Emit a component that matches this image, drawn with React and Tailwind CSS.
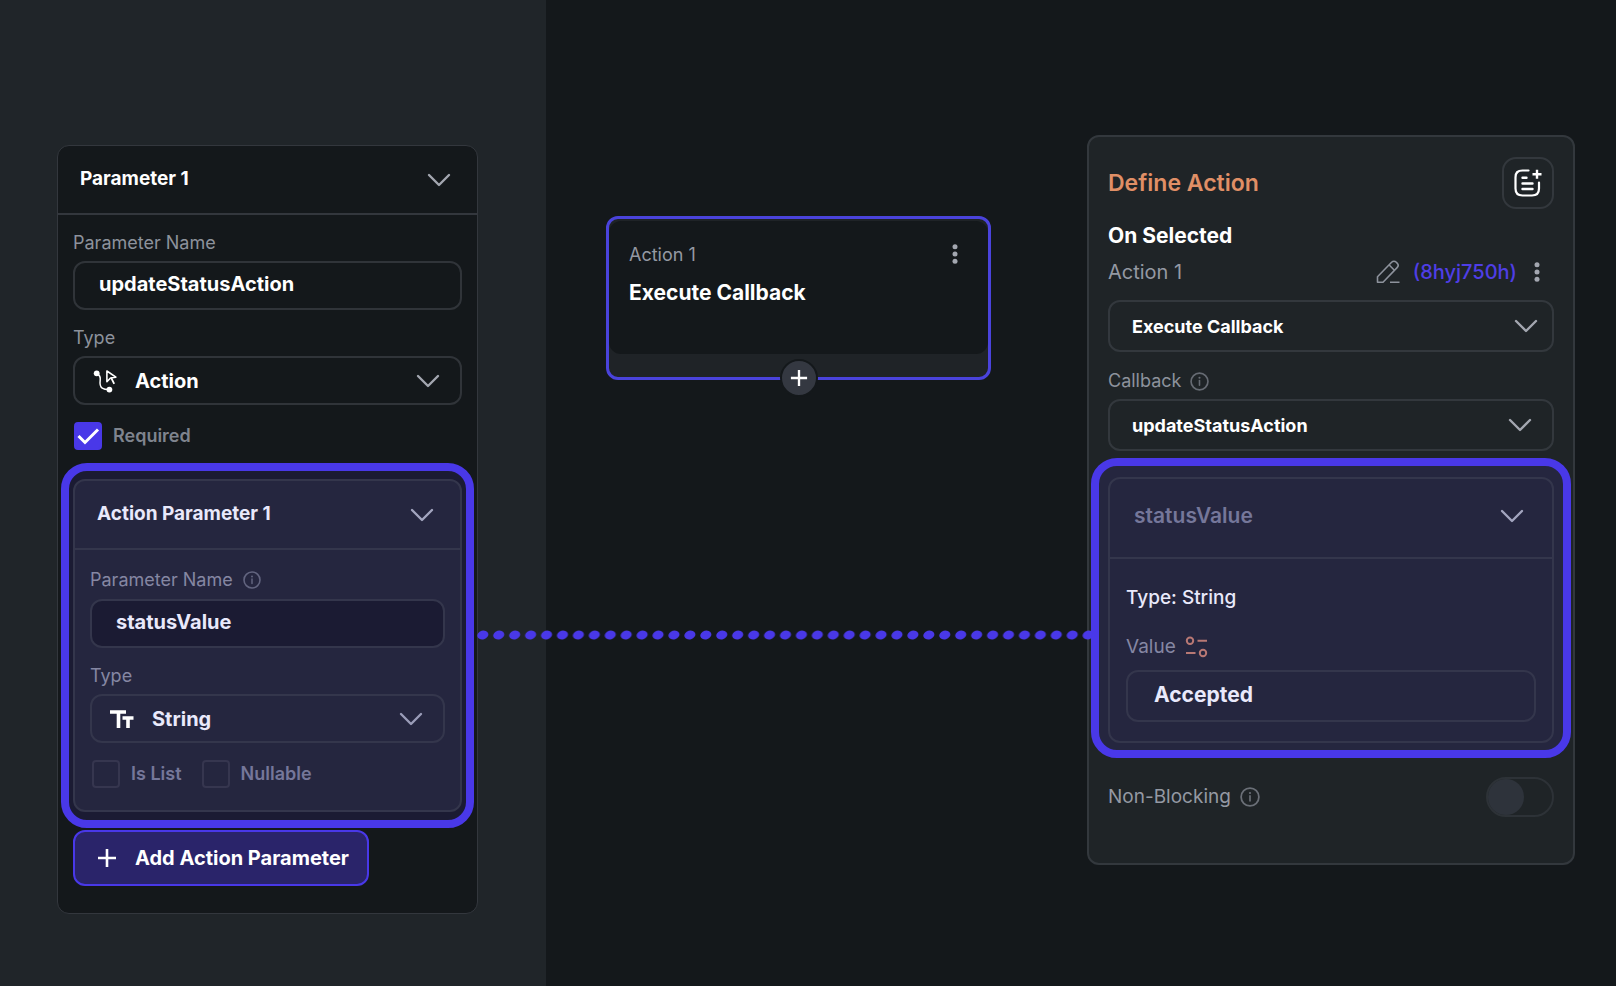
/* ---------- icons ---------- */

function Chevron({ className = '' }) {
  return (
    <svg viewBox="0 0 24 14" fill="none" className={`h-[14px] w-6 ${className}`} aria-hidden>
      <path d="M2 2l10 10L22 2" stroke="currentColor" strokeWidth="2.4" strokeLinecap="round" strokeLinejoin="round" />
    </svg>
  )
}

function InfoIcon({ className = 'h-[18px] w-[18px]' }) {
  return (
    <svg viewBox="0 0 18 18" fill="none" className={className} aria-hidden>
      <circle cx="9" cy="9" r="8" stroke="currentColor" strokeWidth="1.6" />
      <path d="M9 8v4.6" stroke="currentColor" strokeWidth="1.5" strokeLinecap="round" />
      <circle cx="9" cy="5.4" r="1" fill="currentColor" />
    </svg>
  )
}

function KebabIcon() {
  return (
    <svg viewBox="0 0 6 20" fill="currentColor" className="h-5 w-[6px]" aria-hidden>
      <circle cx="3" cy="2.7" r="2.5" />
      <circle cx="3" cy="10" r="2.5" />
      <circle cx="3" cy="17.3" r="2.5" />
    </svg>
  )
}

function PlusIcon({ className = 'h-5 w-5' }) {
  return (
    <svg viewBox="0 0 20 20" fill="none" className={className} aria-hidden>
      <path d="M10 1v18M1 10h18" stroke="currentColor" strokeWidth="2.6" />
    </svg>
  )
}

function ActionIcon() {
  return (
    <svg viewBox="0 0 24 24" fill="none" className="h-6 w-6" aria-hidden>
      <circle cx="3.7" cy="4.3" r="2.9" fill="currentColor" />
      <circle cx="16.4" cy="20.6" r="2.9" fill="currentColor" />
      <path
        d="M4 5c2.6 1 3.600 3.200 3.200 6.200-.5 3.800-.4 6.400 2 8 1.800 1.200 4.400 1.400 6.600 1.400"
        stroke="currentColor"
        strokeWidth="1.5"
      />
      <path d="M13.900 2v10.800l3.600-3.800 5.400-.8z" stroke="currentColor" strokeWidth="1.6" strokeLinejoin="round" />
      <path d="M18.200 8.800l3 6" stroke="currentColor" strokeWidth="1.8" />
    </svg>
  )
}

function TextTypeIcon() {
  return (
    <svg viewBox="0 0 24 20" fill="none" className="h-5 w-6" aria-hidden>
      <path d="M0 3h16M8.500 2v17" stroke="currentColor" strokeWidth="3.600" />
      <path d="M12.500 9h11M18 8v11" stroke="currentColor" strokeWidth="3.600" />
    </svg>
  )
}

function NoteAddIcon() {
  return (
    <svg viewBox="0 0 28 28" fill="none" className="h-7 w-7" aria-hidden>
      <path
        d="M14.500 1.500H8.500c-5 0-7 2-7 7v11c0 5 2 7 7 7h9.500c5 0 7-2 7-7V13.500"
        stroke="currentColor"
        strokeWidth="2.200"
        strokeLinecap="round"
      />
      <path d="M8.500 8.800h4M8.500 14.500h10M8.500 20h10" stroke="currentColor" strokeWidth="2.400" strokeLinecap="round" />
      <path d="M23 .8v9M18.500 5.300h9" stroke="currentColor" strokeWidth="2.400" />
    </svg>
  )
}

function EditIcon() {
  return (
    <svg viewBox="0 0 24 24" fill="none" className="h-6 w-6" aria-hidden>
      <path
        d="M1.500 22.300v-5.600L15.600 2.300c1.400-1.400 3.300-1.400 4.700 0l.8.8c1.400 1.400 1.400 3.100 0 4.500L7 22.300z"
        stroke="currentColor"
        strokeWidth="1.600"
        strokeLinejoin="round"
      />
      <path d="M13.200 5l5.200 5.200M14 22.300h9.500" stroke="currentColor" strokeWidth="1.600" />
    </svg>
  )
}

function VariableIcon() {
  return (
    <svg viewBox="0 0 24 22" fill="none" className="h-[22px] w-6" aria-hidden>
      <g stroke="currentColor" strokeWidth="2">
        <circle cx="5" cy="4.800" r="3.200" />
        <path d="M12.500 4.800H22M1 17h9.500" />
        <circle cx="18" cy="17" r="3.200" />
      </g>
    </svg>
  )
}

/* ---------- form parts ---------- */

function CheckBox({ id, label, defaultChecked, tone }) {
  return (
    <div className="flex items-center gap-[11px]">
      <span className="relative flex h-7 w-7">
        <input
          id={id}
          type="checkbox"
          defaultChecked={defaultChecked}
          className={`peer h-7 w-7 appearance-none rounded-[4px] border-2 checked:border-[#4938e8] checked:bg-[#4938e8] ${tone === 'tinted' ? 'border-[#36364f]' : 'border-[#363a42]'}`}
        />
        <svg
          viewBox="0 0 28 28"
          fill="none"
          className="pointer-events-none absolute inset-0 hidden h-7 w-7 peer-checked:block"
          aria-hidden
        >
          <path d="M4.500 14l6.500 6.500L24 7.500" stroke="white" strokeWidth="3" />
        </svg>
      </span>
      <label
        htmlFor={id}
        className={`text-[18px] leading-6 font-semibold ${tone === 'tinted' ? 'text-[#75779a]' : 'text-[#7f848e]'}`}
      >
        {label}
      </label>
    </div>
  )
}

function SelectBox({ id, label, value, icon, className = '', chevronClass = '' }) {
  return (
    <div className="relative">
      {icon && (
        <span className="pointer-events-none absolute inset-y-0 left-5 flex items-center text-white">{icon}</span>
      )}
      <select
        id={id}
        aria-label={label}
        defaultValue={value}
        className={`w-full appearance-none rounded-xl border-2 bg-transparent font-bold outline-none ${className}`}
      >
        <option>{value}</option>
      </select>
      <span className={`pointer-events-none absolute inset-y-0 flex items-center ${chevronClass}`}>
        <Chevron />
      </span>
    </div>
  )
}

/* ---------- left: component parameters ---------- */

function ActionParameterCard() {
  return (
    <div className="-mx-3 mt-[13px] rounded-[26px] border-8 border-[#4938e8] bg-[#1b1b33] px-1 py-2">
      <div className="rounded-xl border-2 border-[#34364c] bg-[#25263f] pb-[22px]">
        <button
          type="button"
          aria-expanded="true"
          className="flex h-[69px] w-full items-center justify-between border-b-2 border-[#34364c] pr-[26px] pl-[22px] text-[19px] font-bold text-[#e9e9fb]"
        >
          Action Parameter 1
          <Chevron className="text-[#a3a5bf]" />
        </button>
        <div className="px-[15px] pt-[18px]">
          <label htmlFor="inner-name" className="flex items-center gap-[10px] text-[18px] leading-6 text-[#8587a3]">
            Parameter Name
            <span className="text-[#62647f]">
              <InfoIcon />
            </span>
          </label>
          <input
            id="inner-name"
            defaultValue="statusValue"
            className="mt-[7px] h-[49px] w-full rounded-xl border-2 border-[#34364c] bg-[#1b1b33] px-6 pb-1 text-[20px] font-bold text-[#e9e9fb] outline-none"
          />
          <label htmlFor="inner-type" className="mt-4 mb-[6px] block text-[18px] leading-6 text-[#8587a3]">
            Type
          </label>
          <SelectBox
            id="inner-type"
            value="String"
            icon={<TextTypeIcon />}
            className="h-[49px] border-[#34364c] pl-[60px] text-[20px] text-[#e9e9fb]"
            chevronClass="right-[22px] text-[#9a9cb8]"
          />
          <div className="mt-[17px] flex gap-5 pl-[2px]">
            <CheckBox id="is-list" label="Is List" tone="tinted" />
            <CheckBox id="nullable" label="Nullable" tone="tinted" />
          </div>
        </div>
      </div>
    </div>
  )
}

function ParameterCard() {
  return (
    <section className="rounded-xl border border-[#33373d] bg-[#14181b] pb-[27px]">
      <button
        type="button"
        aria-expanded="true"
        className="flex h-[69px] w-full items-center justify-between border-b-2 border-[#33373d] pr-[26px] pl-[22px] text-[19px] font-bold text-white"
      >
        Parameter 1
        <Chevron className="text-[#a3a7b0]" />
      </button>
      <div className="px-[15px] pt-4">
        <label htmlFor="param-name" className="block text-[18px] leading-6 text-[#8d929c]">
          Parameter Name
        </label>
        <input
          id="param-name"
          defaultValue="updateStatusAction"
          className="mt-[6px] h-[49px] w-full rounded-xl border-2 border-[#303439] bg-transparent px-6 pb-1 text-[20px] font-bold text-white outline-none"
        />
        <label htmlFor="param-type" className="mt-4 mb-[6px] block text-[18px] leading-6 text-[#8d929c]">
          Type
        </label>
        <SelectBox
          id="param-type"
          value="Action"
          icon={<ActionIcon />}
          className="h-[49px] border-[#303439] pl-[60px] text-[20px] text-white"
          chevronClass="right-[22px] text-[#a3a7b0]"
        />
        <div className="mt-[17px] pl-px">
          <CheckBox id="required" label="Required" defaultChecked />
        </div>
        <ActionParameterCard />
        <button
          type="button"
          className="mt-[2px] flex h-14 items-center gap-[18px] rounded-xl border-2 border-[#4938e8] bg-[#2a246a] pr-[18px] pl-[22px] text-[20px] font-bold text-white"
        >
          <PlusIcon />
          Add Action Parameter
        </button>
      </div>
    </section>
  )
}

/* ---------- middle: action node on the canvas ---------- */

function ActionNode() {
  return (
    <article className="relative rounded-xl border-[3px] border-[#4a43dc] bg-[#1f2327] pt-[2px] pb-[23px]">
      <div className="h-[133px] rounded-xl bg-[#14181b] px-5 pt-[22px]">
        <div className="flex items-start justify-between pr-[10px]">
          <p className="text-[18px] leading-6 text-[#9499a3]">Action 1</p>
          <button type="button" aria-label="Action options" className="pt-px text-[#a3a7b0]">
            <KebabIcon />
          </button>
        </div>
        <h2 className="mt-3 text-[21px] leading-7 font-bold text-white">Execute Callback</h2>
      </div>
      <button
        type="button"
        aria-label="Add action"
        className="absolute -bottom-5 left-1/2 flex h-[38px] w-[38px] -translate-x-1/2 items-center justify-center rounded-full border-2 border-[#14181b] bg-[#343841] text-white"
      >
        <PlusIcon className="h-[18px] w-[18px]" />
      </button>
    </article>
  )
}

function Connector() {
  return (
    <svg className="absolute top-[629px] -right-2 -left-[69px] h-3 w-[calc(100%+77px)]" aria-hidden>
      <defs>
        <pattern id="dots" width="15.930" height="12" patternUnits="userSpaceOnUse">
          <ellipse cx="5.800" cy="6" rx="5.600" ry="4.300" fill="#4938e8" transform="rotate(-16 5.800 6)" />
        </pattern>
      </defs>
      <rect width="100%" height="12" fill="url(#dots)" />
    </svg>
  )
}

/* ---------- right: define action ---------- */

function CallbackValueCard() {
  return (
    <div className="-mx-[17px] mt-[7px] rounded-[26px] border-8 border-[#4938e8] bg-[#25263f] px-[9px] pt-[11px] pb-[7px]">
      <div className="rounded-xl border-2 border-[#34364c] pb-[19px]">
        <button
          type="button"
          aria-expanded="true"
          className="flex h-20 w-full items-center justify-between border-b-2 border-[#34364c] pr-7 pb-1 pl-6 text-[21px] font-semibold text-[#75779a]"
        >
          statusValue
          <Chevron className="text-[#a3a5bf]" />
        </button>
        <div className="px-4 pt-[25px]">
          <p className="text-[19px] leading-7 font-medium text-[#e9e9fb]">Type: String</p>
          <label htmlFor="value" className="mt-[21px] flex items-center gap-[9px] text-[19px] leading-7 text-[#8587a3]">
            Value
            <span className="text-[#b87874]">
              <VariableIcon />
            </span>
          </label>
          <input
            id="value"
            defaultValue="Accepted"
            className="mt-[9px] h-[52px] w-full rounded-xl border-2 border-[#34364c] bg-transparent px-[26px] pb-1 text-[21px] font-bold text-[#e9e9fb] outline-none"
          />
        </div>
      </div>
    </div>
  )
}

function DefineActionPanel() {
  return (
    <section className="rounded-xl border-2 border-[#33383d] bg-[#1f2427] px-[19px] pt-5 pb-[46px]">
      <div className="flex items-center justify-between">
        <h1 className="text-[23px] leading-8 font-semibold text-[#e08f66]">Define Action</h1>
        <button
          type="button"
          aria-label="Add note"
          className="flex h-[52px] w-[52px] items-center justify-center rounded-[14px] border-2 border-[#33383d] text-white"
        >
          <NoteAddIcon />
        </button>
      </div>
      <h2 className="mt-[13px] text-[21px] leading-7 font-bold text-white">On Selected</h2>
      <div className="mt-2 flex items-center justify-between pr-[14px]">
        <p className="text-[20px] leading-7 text-[#9499a3]">Action 1</p>
        <div className="flex items-center gap-[13px]">
          <button type="button" aria-label="Rename action" className="text-[#8d929c]">
            <EditIcon />
          </button>
          <span className="text-[20px] leading-7 font-medium text-[#4f3ee6]">(8hyj750h)</span>
          <button type="button" aria-label="Action options" className="ml-1 text-[#a3a7b0]">
            <KebabIcon />
          </button>
        </div>
      </div>
      <div className="mt-[14px]">
        <SelectBox
          id="action-kind"
          label="Action type"
          value="Execute Callback"
          className="h-[52px] border-[#33383d] pl-[22px] text-[18px] text-white"
          chevronClass="right-4 text-[#a3a7b0]"
        />
      </div>
      <label htmlFor="callback" className="mt-[17px] mb-[6px] flex items-center gap-[9px] text-[18px] leading-6 text-[#8d929c]">
        Callback
        <span className="text-[#666b73]">
          <InfoIcon className="h-[19px] w-[19px]" />
        </span>
      </label>
      <SelectBox
        id="callback"
        value="updateStatusAction"
        className="h-[52px] border-[#33383d] pl-[22px] text-[18px] text-white"
        chevronClass="right-[22px] text-[#a3a7b0]"
      />
      <CallbackValueCard />
      <div className="mt-[19px] flex items-center justify-between">
        <label htmlFor="non-blocking" className="flex items-center gap-[9px] text-[19px] leading-7 text-[#9499a3]">
          Non-Blocking
          <span className="text-[#6a6f77]">
            <InfoIcon className="h-5 w-5" />
          </span>
        </label>
        <span className="relative flex">
          <input
            id="non-blocking"
            type="checkbox"
            role="switch"
            className="peer h-10 w-[68px] appearance-none rounded-full border-2 border-[#2d3237]"
          />
          <span className="pointer-events-none absolute top-[2px] left-[2px] h-9 w-9 rounded-full bg-[#2e333b] peer-checked:left-[30px] peer-checked:bg-[#4938e8]" />
        </span>
      </div>
    </section>
  )
}

export default function App() {
  return (
    <main className="flex min-h-screen bg-[#14181b] font-[Inter,sans-serif]">
      <aside className="w-[34%] max-w-[546px] shrink-0 bg-[#202529] pt-[145px] pr-[68px] pb-[73px] pl-[57px]">
        <ParameterCard />
      </aside>
      <div className="relative z-10 min-w-0 flex-1 pt-[216px] pr-24 pl-[60px]">
        <div className="max-w-[420px]">
          <ActionNode />
        </div>
        <Connector />
      </div>
      <div className="mr-[41px] w-[488px] shrink-0 pt-[135px]">
        <DefineActionPanel />
      </div>
    </main>
  )
}
